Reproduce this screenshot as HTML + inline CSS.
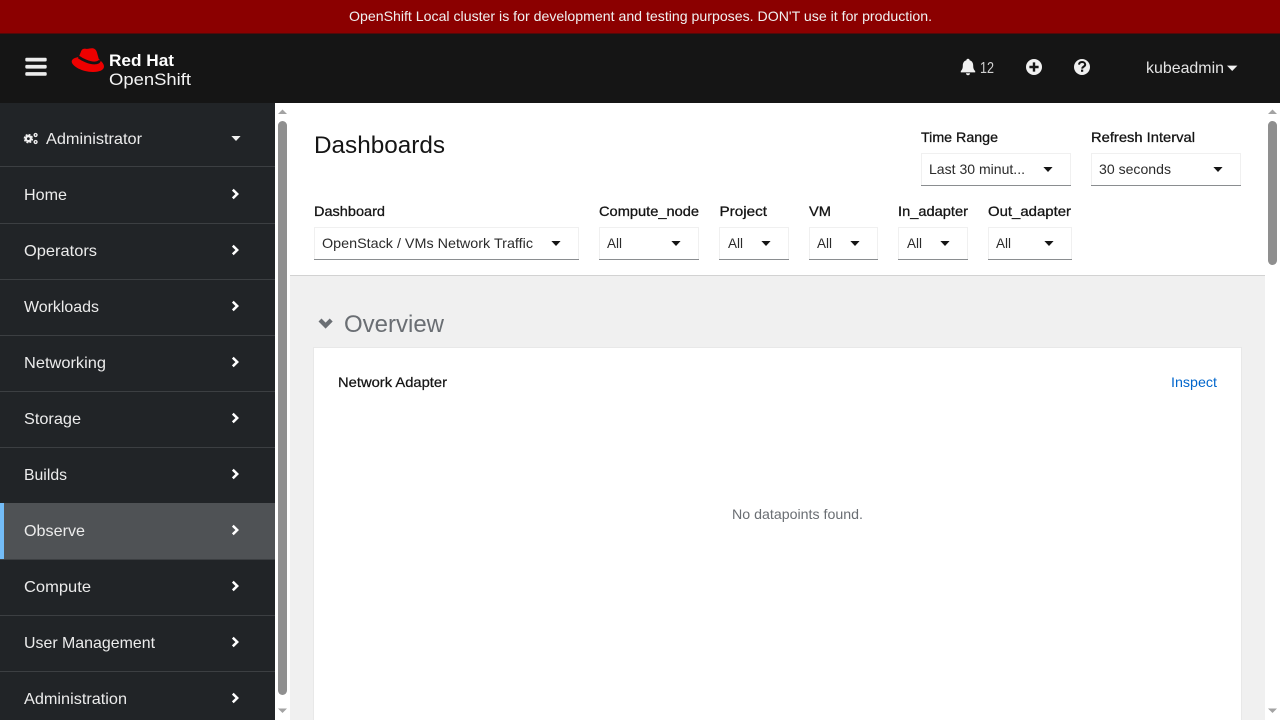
<!DOCTYPE html>
<html lang="en">
<head>
<meta charset="utf-8">
<title>Dashboards · Red Hat OpenShift</title>
<style>
html,body{margin:0;padding:0;width:1280px;height:720px;overflow:hidden;background:#fff}
svg{display:block}
text{font-family:"Liberation Sans",sans-serif;white-space:pre}
.nav{font-size:16px;fill:#ececec}
.lab{font-size:14px;fill:#151515;stroke:#151515;stroke-width:.3}
.val{font-size:14px;fill:#2b2b2b}
.box{fill:#fff;stroke:#f0f0f0}
.ul{fill:#8a8d90}
.thumb{fill:#8f8f8f}
.sep{fill:#3c3f42}
</style>
</head>
<body>
<svg width="1280" height="720" viewBox="0 0 1280 720" xmlns="http://www.w3.org/2000/svg">
<defs>
<path id="car" d="M-4.6 -2.5H4.6L0 2.5Z"/>
<path id="chev" d="M-2.2 -4.3L2.2 0L-2.2 4.3" fill="none" stroke="#fff" stroke-width="2.5"/>
</defs>

<!-- Banner -->
<rect width="1280" height="33.5" fill="#8b0000"/>
<text x="349" y="21" font-size="14" fill="#f0f0f0" textLength="583" lengthAdjust="spacingAndGlyphs">OpenShift Local cluster is for development and testing purposes. DON'T use it for production.</text>

<!-- Masthead -->
<rect y="33.5" width="1280" height="69.5" fill="#151515"/>
<rect x="25.3" y="57.8" width="21.4" height="3.7" rx="1.2" fill="#ececec"/>
<rect x="25.3" y="64.9" width="21.4" height="3.7" rx="1.2" fill="#ececec"/>
<rect x="25.3" y="72.1" width="21.4" height="3.7" rx="1.2" fill="#ececec"/>

<!-- Logo -->
<path d="M85 48.6C82.5 48.6 81.5 50 81 51.5L78.8 57C75 57.5 71.7 59 71.7 61.5C71.7 66 82 72 93 72C99.5 72 104 70 104 66.5C104 63.5 101 61 98.8 59L96.8 52C96 49.6 94.3 48.3 92 48.3C89.5 48.3 88 49.3 85 48.6Z" fill="#e00"/>
<path d="M78.6 57C82 59.5 89 63 94.5 63C97.5 63 99.5 62 99.3 60.2" fill="none" stroke="#151515" stroke-width="2.8"/>
<text x="109" y="66" font-size="16.5" font-weight="700" fill="#fff" textLength="65" lengthAdjust="spacingAndGlyphs">Red Hat</text>
<text x="109" y="85" font-size="17" fill="#f4f4f4" textLength="82" lengthAdjust="spacingAndGlyphs">OpenShift</text>

<!-- Masthead tools -->
<path d="M968 58.8C969 58.8 969.7 59.5 969.7 60.4C972.3 61 973.2 63.3 973.2 65.6C973.2 68.6 974 69.8 975.2 71V72.4H960.8V71C962 69.8 962.8 68.6 962.8 65.6C962.8 63.3 963.7 61 966.3 60.4C966.3 59.5 967 58.8 968 58.8ZM966 73.2H970C970 74.4 969.1 75.2 968 75.2S966 74.4 966 73.2Z" fill="#f0f0f0"/>
<text x="980" y="73" font-size="16" fill="#d2d2d2" textLength="14" lengthAdjust="spacingAndGlyphs">12</text>
<circle cx="1034" cy="67" r="8" fill="#f0f0f0"/>
<path d="M1034 62.4V71.6M1029.4 67H1038.6" stroke="#151515" stroke-width="2.4"/>
<circle cx="1082" cy="67" r="8" fill="#f0f0f0"/>
<path d="M1079 64.6C1079.2 62.9 1080.4 62 1082.1 62C1083.9 62 1085.2 63.1 1085.2 64.6C1085.2 66.6 1082.3 66.6 1082.1 68.6" fill="none" stroke="#151515" stroke-width="2"/>
<rect x="1081" y="69.6" width="2.2" height="2.2" fill="#151515"/>
<text x="1146" y="73" font-size="16" fill="#e4e4e4" textLength="78" lengthAdjust="spacingAndGlyphs">kubeadmin</text>
<path d="M1227 65.6H1237.4L1232.2 71Z" fill="#f0f0f0"/>

<!-- Sidebar -->
<rect y="103" width="275" height="617" fill="#212427"/>
<rect y="503" width="275" height="56" fill="#4f5255"/>
<rect y="503" width="4" height="56" fill="#73bcf7"/>
<rect y="166" width="275" height="1" class="sep"/>
<rect y="223" width="275" height="1" class="sep"/>
<rect y="279" width="275" height="1" class="sep"/>
<rect y="335" width="275" height="1" class="sep"/>
<rect y="391" width="275" height="1" class="sep"/>
<rect y="447" width="275" height="1" class="sep"/>
<rect y="559" width="275" height="1" class="sep"/>
<rect y="615" width="275" height="1" class="sep"/>
<rect y="671" width="275" height="1" class="sep"/>

<circle cx="28.4" cy="138.6" r="2.5" fill="none" stroke="#f0f0f0" stroke-width="2.2"/>
<circle cx="28.4" cy="138.6" r="4" fill="none" stroke="#f0f0f0" stroke-width="1.4" stroke-dasharray="2 1.15"/>
<circle cx="35.6" cy="135" r="1.4" fill="none" stroke="#f0f0f0" stroke-width="1.4"/>
<circle cx="35.6" cy="142" r="1.4" fill="none" stroke="#f0f0f0" stroke-width="1.4"/>
<text x="46" y="144" class="nav" textLength="96" lengthAdjust="spacingAndGlyphs">Administrator</text>
<use href="#car" x="236" y="138.5" fill="#f0f0f0"/>

<text x="24" y="200" class="nav" textLength="43" lengthAdjust="spacingAndGlyphs">Home</text>
<text x="24" y="256" class="nav" textLength="73" lengthAdjust="spacingAndGlyphs">Operators</text>
<text x="24" y="312" class="nav" textLength="75" lengthAdjust="spacingAndGlyphs">Workloads</text>
<text x="24" y="368" class="nav" textLength="82" lengthAdjust="spacingAndGlyphs">Networking</text>
<text x="24" y="424" class="nav" textLength="57" lengthAdjust="spacingAndGlyphs">Storage</text>
<text x="24" y="480" class="nav" textLength="43" lengthAdjust="spacingAndGlyphs">Builds</text>
<text x="24" y="536" class="nav" textLength="61" lengthAdjust="spacingAndGlyphs">Observe</text>
<text x="24" y="592" class="nav" textLength="67" lengthAdjust="spacingAndGlyphs">Compute</text>
<text x="24" y="648" class="nav" textLength="131" lengthAdjust="spacingAndGlyphs">User Management</text>
<text x="24" y="704" class="nav" textLength="103" lengthAdjust="spacingAndGlyphs">Administration</text>

<use href="#chev" x="235" y="194"/>
<use href="#chev" x="235" y="250"/>
<use href="#chev" x="235" y="306"/>
<use href="#chev" x="235" y="362"/>
<use href="#chev" x="235" y="418"/>
<use href="#chev" x="235" y="474"/>
<use href="#chev" x="235" y="530"/>
<use href="#chev" x="235" y="586"/>
<use href="#chev" x="235" y="642"/>
<use href="#chev" x="235" y="698"/>

<!-- Sidebar scrollbar -->
<rect x="275" y="103" width="15" height="617" fill="#fff"/>
<rect x="278" y="121" width="9" height="574" rx="4.5" class="thumb"/>
<path d="M282.5 109.5L287 114H278Z" fill="#a3a3a3"/>
<path d="M282.5 713L287 708.5H278Z" fill="#a3a3a3"/>

<!-- Main -->
<rect x="290" y="103" width="975" height="172" fill="#fff"/>
<rect x="290" y="275" width="975" height="445" fill="#f0f0f0"/>
<rect x="290" y="275" width="975" height="1" fill="#d2d2d2"/>

<text x="314" y="153" font-size="24" fill="#151515" textLength="131" lengthAdjust="spacingAndGlyphs">Dashboards</text>

<text x="921" y="142" class="lab" textLength="77" lengthAdjust="spacingAndGlyphs">Time Range</text>
<rect x="921.5" y="153.5" width="149" height="32" class="box"/><rect x="921" y="185" width="150" height="1" class="ul"/>
<text x="929" y="174" class="val" textLength="96" lengthAdjust="spacingAndGlyphs">Last 30 minut...</text>
<use href="#car" x="1048" y="169.5" fill="#151515"/>

<text x="1091" y="142" class="lab" textLength="104" lengthAdjust="spacingAndGlyphs">Refresh Interval</text>
<rect x="1091.5" y="153.5" width="149" height="32" class="box"/><rect x="1091" y="185" width="150" height="1" class="ul"/>
<text x="1099" y="174" class="val" textLength="72" lengthAdjust="spacingAndGlyphs">30 seconds</text>
<use href="#car" x="1218" y="169.5" fill="#151515"/>

<text x="314" y="216" class="lab" textLength="71" lengthAdjust="spacingAndGlyphs">Dashboard</text>
<rect x="314.5" y="227.5" width="264" height="32" class="box"/><rect x="314" y="259" width="265" height="1" class="ul"/>
<text x="322" y="248" class="val" textLength="211" lengthAdjust="spacingAndGlyphs">OpenStack / VMs Network Traffic</text>
<use href="#car" x="556" y="243.5" fill="#151515"/>

<text x="599" y="216" class="lab" textLength="100" lengthAdjust="spacingAndGlyphs">Compute_node</text>
<rect x="599.5" y="227.5" width="99" height="32" class="box"/><rect x="599" y="259" width="100" height="1" class="ul"/>
<text x="607" y="248" class="val" textLength="15" lengthAdjust="spacingAndGlyphs">All</text>
<use href="#car" x="676" y="243.5" fill="#151515"/>

<text x="719.5" y="216" class="lab" textLength="47.5" lengthAdjust="spacingAndGlyphs">Project</text>
<rect x="719.5" y="227.5" width="69" height="32" class="box"/><rect x="719" y="259" width="70" height="1" class="ul"/>
<text x="728" y="248" class="val" textLength="15" lengthAdjust="spacingAndGlyphs">All</text>
<use href="#car" x="766" y="243.5" fill="#151515"/>

<text x="809" y="216" class="lab" textLength="22" lengthAdjust="spacingAndGlyphs">VM</text>
<rect x="809.5" y="227.5" width="68" height="32" class="box"/><rect x="809" y="259" width="69" height="1" class="ul"/>
<text x="817" y="248" class="val" textLength="15" lengthAdjust="spacingAndGlyphs">All</text>
<use href="#car" x="855" y="243.5" fill="#151515"/>

<text x="898" y="216" class="lab" textLength="70" lengthAdjust="spacingAndGlyphs">In_adapter</text>
<rect x="898.5" y="227.5" width="69" height="32" class="box"/><rect x="898" y="259" width="70" height="1" class="ul"/>
<text x="907" y="248" class="val" textLength="15" lengthAdjust="spacingAndGlyphs">All</text>
<use href="#car" x="945" y="243.5" fill="#151515"/>

<text x="988" y="216" class="lab" textLength="83" lengthAdjust="spacingAndGlyphs">Out_adapter</text>
<rect x="988.5" y="227.5" width="83" height="32" class="box"/><rect x="988" y="259" width="84" height="1" class="ul"/>
<text x="996" y="248" class="val" textLength="15" lengthAdjust="spacingAndGlyphs">All</text>
<use href="#car" x="1049" y="243.5" fill="#151515"/>

<!-- Overview -->
<path d="M320 320L325.6 325.6L331.2 320" fill="none" stroke="#6a6e73" stroke-width="4.2"/>
<text x="344" y="332" font-size="24" fill="#6a6e73" textLength="100" lengthAdjust="spacingAndGlyphs">Overview</text>

<!-- Card -->
<rect x="313" y="347" width="929" height="373" fill="#e8e8e8"/>
<rect x="314" y="348" width="927" height="372" fill="#fff"/>
<text x="338" y="387" font-size="14" fill="#151515" stroke="#151515" stroke-width=".25" textLength="109" lengthAdjust="spacingAndGlyphs">Network Adapter</text>
<text x="1171" y="387" font-size="14" fill="#0066cc" textLength="46" lengthAdjust="spacingAndGlyphs">Inspect</text>
<text x="732" y="519" font-size="14" fill="#6a6e73" textLength="131" lengthAdjust="spacingAndGlyphs">No datapoints found.</text>

<!-- Main scrollbar -->
<rect x="1265" y="103" width="15" height="617" fill="#fff"/>
<rect x="1268" y="121" width="9" height="144" rx="4.5" class="thumb"/>
<path d="M1272.5 109.5L1277 114H1268Z" fill="#a3a3a3"/>
<path d="M1272.5 713L1277 708.5H1268Z" fill="#a3a3a3"/>
</svg>
</body>
</html>
